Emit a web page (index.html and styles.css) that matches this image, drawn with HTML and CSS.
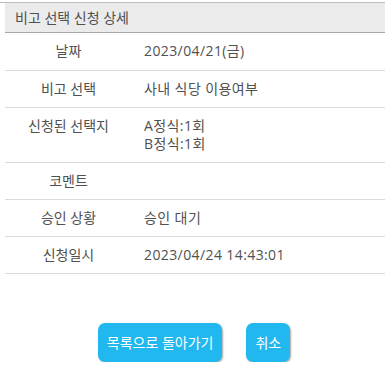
FILE: index.html
```html
<!DOCTYPE html>
<html>
	<head>
		<meta charset="utf-8">
		<meta name="viewport" content="width=device-width, initial-scale=1.0">
		<link rel="stylesheet" href="styles.css">
	</head>
	<body>
		<div class="detail">
			<div class="detail-title">비고 선택 신청 상세</div>
			<table class="detail-table">
				<tr>
					<th>날짜</th>
					<td>2023/04/21(금)</td>
				</tr>
				<tr>
					<th>비고 선택</th>
					<td>사내 식당 이용여부</td>
				</tr>
				<tr>
					<th>신청된 선택지</th>
					<td>A정식:1회<br>B정식:1회</td>
				</tr>
				<tr>
					<th>코멘트</th>
					<td></td>
				</tr>
				<tr>
					<th>승인 상황</th>
					<td>승인 대기</td>
				</tr>
				<tr>
					<th>신청일시</th>
					<td>2023/04/24 14:43:01</td>
				</tr>
			</table>
		</div>
		<div class="buttons">
			<button class="btn">목록으로 돌아가기</button>
			<button class="btn">취소</button>
		</div>
	</body>
</html>
```

FILE: styles.css
```css
* {
	margin:0;
	padding:0;
	box-sizing: border-box;
}
body {
	font-family: "Open Sans", "Noto Sans CJK KR", sans-serif;
	font-size: 14px;
	color: #505050;
	background-color: #fff;
}
.detail {
	margin-top: 2px;
	margin-right: 3px;
	border-top: 1px solid #bdbdbd;
	padding-left: 5px;
}
.detail-title {
	height: 30px;
	line-height: 29px;
	padding-left: 10px;
	background-color: #ebebeb;
	border-bottom: 1px solid #a8a8a8;
}
.detail-table {
	width: 100%;
	border-collapse: collapse;
}
.detail-table th,
.detail-table td {
	font-weight: normal;
	line-height: 18px;
	padding: 9px 0;
	border-bottom: 1px solid #dadada;
	vertical-align: top;
	text-align: left;
}
.detail-table th {
	width: 127px;
	text-align: center;
}
.detail-table td {
	padding-left: 12px;
	height: 37px;
	letter-spacing: 0.4px;
}
.buttons {
	display: flex;
	justify-content: center;
	gap: 24px;
	margin-top: 49px;
}
.btn {
	height: 39px;
	padding: 0 9px;
	border: none;
	border-radius: 7px;
	background-color: #20b8ee;
	color: #fff;
	font-family: "Open Sans", "Noto Sans CJK KR", sans-serif;
	font-size: 14px;
	box-shadow: 1px 1px 2px rgba(0,0,0,0.35);
}
```
